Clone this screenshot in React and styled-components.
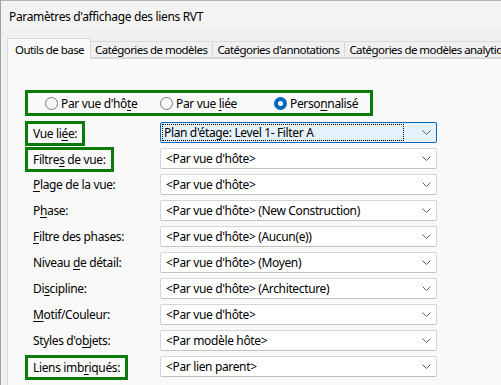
import React from 'react'
import styled, { createGlobalStyle } from 'styled-components'

const GlobalStyle = createGlobalStyle`
  html, body {
    margin: 0;
    padding: 0;
    background: #f0f0f0;
  }
  body {
    font-family: "Noto Sans", "Open Sans", sans-serif;
    font-size: 12px;
    letter-spacing: -0.35px;
    color: #000;
  }
`

const Window = styled.div`
  width: 501px;
  height: 385px;
  box-sizing: border-box;
  border-left: 1px solid #a0a0a0;
  border-top: 1px solid #b4b4b4;
  background: #f0f0f0;
  overflow: hidden;
  display: flex;
  flex-direction: column;
`

const TitleBar = styled.div`
  height: 29px;
  flex-shrink: 0;
  display: flex;
  align-items: center;
  padding: 1px 0 0 8px;
  box-sizing: border-box;
  background: #f3f3f3;
`

const Body = styled.div`
  flex: 1;
  padding: 8px 0 0 6px;
  display: flex;
  flex-direction: column;
  min-height: 0;
`

const TabStrip = styled.div`
  display: flex;
  align-items: flex-end;
  height: 20px;
  flex-shrink: 0;
  white-space: nowrap;
`

const Tab = styled.div`
  box-sizing: border-box;
  flex-shrink: 0;
  height: ${p => (p.$active ? 21 : 17)}px;
  margin-bottom: ${p => (p.$active ? -1 : 0)}px;
  padding: ${p => (p.$active ? '0 6px 0 7px' : '0 5px 0 4px')};
  display: flex;
  align-items: center;
  font-size: 11.5px;
  letter-spacing: -0.55px;
  border: 1px solid #d9d9d9;
  border-bottom: ${p => (p.$active ? 'none' : '1px solid #d9d9d9')};
  border-left: ${p => (p.$first || p.$active ? '1px solid #d9d9d9' : 'none')};
  background: ${p => (p.$active ? '#f9f9f9' : '#f0f0f0')};
  position: relative;
  z-index: ${p => (p.$active ? 1 : 0)};
`

const Panel = styled.div`
  flex: 1;
  background: #f9f9f9;
  border-left: 1px solid #d9d9d9;
  border-top: 1px solid #d9d9d9;
  padding: 31px 0 0 17px;
`

const RadioGroup = styled.div`
  box-sizing: border-box;
  width: 348px;
  height: 26px;
  border: 3px solid #0a7a0a;
  display: grid;
  grid-template-columns: 115px 114px auto;
  align-items: center;
  padding-left: 17px;
  margin-bottom: 6px;
`

const RadioItem = styled.label`
  display: flex;
  align-items: center;
  gap: 3px;
  white-space: nowrap;
`

const RadioCircle = styled.span`
  box-sizing: border-box;
  width: 13px;
  height: 13px;
  border-radius: 50%;
  flex-shrink: 0;
  border: ${p => (p.$checked ? '4px solid #0067c0' : '1px solid #7a7a7a')};
  background: ${p => (p.$checked ? '#ffffff' : '#f6f6f6')};
`

const Rows = styled.div`
  padding-left: 8px;
  display: flex;
  flex-direction: column;
`

const Row = styled.div`
  display: grid;
  grid-template-columns: 127px 277px;
  height: 26px;
  align-items: start;
`

const Label = styled.div`
  justify-self: start;
  box-sizing: border-box;
  white-space: nowrap;
  height: ${p => (p.$highlight ? 25 : 21)}px;
  line-height: ${p => (p.$highlight ? 19 : 21)}px;
  margin: ${p => (p.$highlight ? '-1px 0 0 -8px' : '0')};
  padding: ${p => (p.$highlight ? '0 5px' : '0')};
  border: ${p => (p.$highlight ? '3px solid #0a7a0a' : 'none')};
`

const Key = styled.span`
  text-decoration: underline;
  text-underline-offset: 2px;
`

const Select = styled.div`
  box-sizing: border-box;
  height: 21px;
  display: flex;
  align-items: center;
  padding: 0 0 0 ${p => (p.$focused ? 1 : 4)}px;
  border: 1px solid ${p => (p.$focused ? '#0067c0' : '#d4d4d4')};
  border-bottom-color: ${p => (p.$focused ? '#0067c0' : '#c2c2c2')};
  border-radius: 2px;
  background: ${p => (p.$focused ? '#e5f1fb' : '#ffffff')};
  white-space: nowrap;
`

const SelectText = styled.span`
  flex: 1;
  box-sizing: border-box;
  height: 17px;
  line-height: 15px;
  padding-left: ${p => (p.$focused ? 1 : 0)}px;
  border: 1px ${p => (p.$focused ? 'dotted #000' : 'solid transparent')};
  margin-right: ${p => (p.$focused ? 18 : 20)}px;
`

const Chevron = () => (
  <svg width="9" height="5" viewBox="0 0 9 5" style={{ marginRight: 5, flexShrink: 0 }}>
    <polyline points="0.5,0.5 4.5,4.5 8.5,0.5" fill="none" stroke="#606060" strokeWidth="1" />
  </svg>
)

const rows = [
  { label: ['Vue li', 'é', 'e:'], value: "Plan d'étage: Level 1- Filter A", hl: true, focused: true },
  { label: ['Filtre', 's', ' de vue:'], value: "<Par vue d'hôte>", hl: true },
  { label: ['', 'P', 'lage de la vue:'], value: "<Par vue d'hôte>" },
  { label: ['P', 'h', 'ase:'], value: "<Par vue d'hôte> (New Construction)" },
  { label: ['', 'F', 'iltre des phases:'], value: "<Par vue d'hôte> (Aucun(e))" },
  { label: ['Niveau ', 'd', 'e détail:'], value: "<Par vue d'hôte> (Moyen)" },
  { label: ['Di', 's', 'cipline:'], value: "<Par vue d'hôte> (Architecture)" },
  { label: ['', 'M', 'otif/Couleur:'], value: "<Par vue d'hôte>" },
  { label: ["Styles d'o", 'b', 'jets:'], value: '<Par modèle hôte>' },
  { label: ['Liens imb', 'r', 'iqués:'], value: '<Par lien parent>', hl: true },
]

function App() {
  return (
    <>
      <GlobalStyle />
      <Window>
        <TitleBar>Paramètres d'affichage des liens RVT</TitleBar>
        <Body>
          <TabStrip>
            <Tab $active $first>Outils de base</Tab>
            <Tab>Catégories de modèles</Tab>
            <Tab>Catégories d'annotations</Tab>
            <Tab>Catégories de modèles analytiques</Tab>
          </TabStrip>
          <Panel>
            <RadioGroup>
              <RadioItem>
                <RadioCircle />
                <span>Par vue d'hô<Key>t</Key>e</span>
              </RadioItem>
              <RadioItem>
                <RadioCircle />
                <span>Par vue <Key>l</Key>iée</span>
              </RadioItem>
              <RadioItem>
                <RadioCircle $checked />
                <span>Perso<Key>n</Key>nalisé</span>
              </RadioItem>
            </RadioGroup>
            <Rows>
              {rows.map((r, i) => (
                <Row key={i}>
                  <Label $highlight={r.hl}>
                    {r.label[0]}<Key>{r.label[1]}</Key>{r.label[2]}
                  </Label>
                  <Select $focused={r.focused}>
                    <SelectText $focused={r.focused}>{r.value}</SelectText>
                    <Chevron />
                  </Select>
                </Row>
              ))}
            </Rows>
          </Panel>
        </Body>
      </Window>
    </>
  )
}

export default App
